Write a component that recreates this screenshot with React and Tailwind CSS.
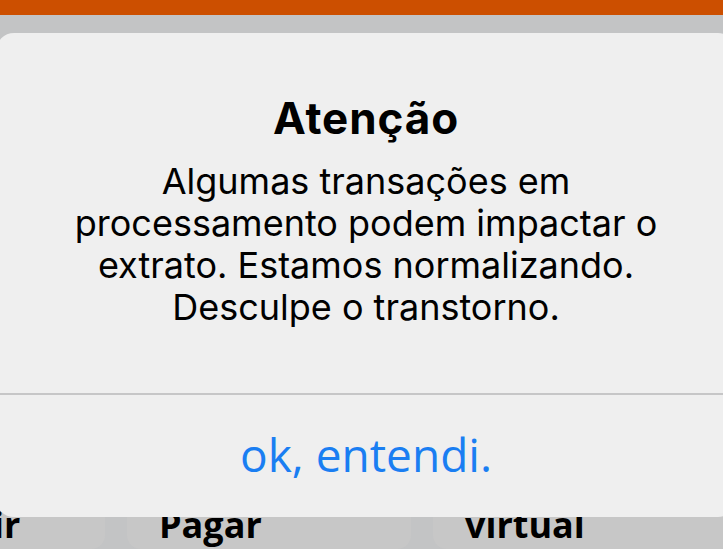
const cards = [
  { label: "Transferir", width: "w-[284px]", offset: "-ml-[179px]", pad: "pl-[20px]" },
  { label: "Pagar", width: "w-[284px]", offset: "", pad: "pl-[32px]" },
  { label: "virtual", width: "w-[300px]", offset: "", pad: "pl-[32px]" },
];

const App = () => {
  return (
    <div className="relative w-[723px] h-[549px] overflow-hidden bg-[#c3c4c5] flex flex-col">
      {/* top app bar */}
      <div className="h-[15px] bg-[#cc4f00] shrink-0" />

      {/* content behind the alert */}
      <div className="flex-1 flex flex-col justify-end">
        <div className="flex gap-[22px] h-[130px]">
          {cards.map((c) => (
            <div
              key={c.label}
              className={`${c.width} ${c.offset} ${c.pad} shrink-0 bg-[#c7c7c7] rounded-[14px] flex items-end pb-[4px]`}
            >
              <span className="font-['Open_Sans',sans-serif] font-bold text-[36px] leading-[40px] text-black">
                {c.label}
              </span>
            </div>
          ))}
        </div>
      </div>

      {/* alert dialog */}
      <div className="absolute left-[-4px] top-[33px] w-[740px] h-[484px] bg-[#efefef] rounded-[18px] flex flex-col">
        <div className="h-[360px] flex flex-col items-center px-[30px] pt-[62px] text-center text-black font-['Inter',sans-serif]">
          <h1 className="text-[44px] leading-[46px] font-bold tracking-[0.9px]">Atenção</h1>
          <p className="mt-[19px] text-[36px] leading-[42px]">
            Algumas transações em
            <br />
            processamento podem impactar o
            <br />
            extrato. Estamos normalizando.
            <br />
            Desculpe o transtorno.
          </p>
        </div>
        <div className="h-[2px] bg-[#c6c6c7]" />
        <button className="flex-1 flex items-center justify-center pb-[4px] font-['Open_Sans',sans-serif] text-[46px] text-[#1a7ef2]">
          ok, entendi.
        </button>
      </div>
    </div>
  );
};

export default App;
